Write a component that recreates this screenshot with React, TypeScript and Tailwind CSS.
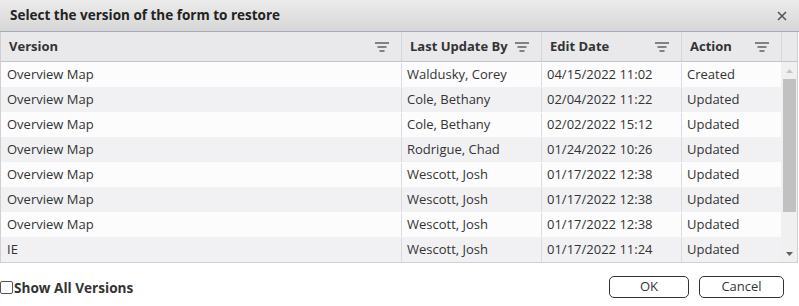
import { FC } from "react";

interface VersionRow {
  version: string;
  updatedBy: string;
  editDate: string;
  action: string;
}

const rows: VersionRow[] = [
  { version: "Overview Map", updatedBy: "Waldusky, Corey", editDate: "04/15/2022 11:02", action: "Created" },
  { version: "Overview Map", updatedBy: "Cole, Bethany", editDate: "02/04/2022 11:22", action: "Updated" },
  { version: "Overview Map", updatedBy: "Cole, Bethany", editDate: "02/02/2022 15:12", action: "Updated" },
  { version: "Overview Map", updatedBy: "Rodrigue, Chad", editDate: "01/24/2022 10:26", action: "Updated" },
  { version: "Overview Map", updatedBy: "Wescott, Josh", editDate: "01/17/2022 12:38", action: "Updated" },
  { version: "Overview Map", updatedBy: "Wescott, Josh", editDate: "01/17/2022 12:38", action: "Updated" },
  { version: "Overview Map", updatedBy: "Wescott, Josh", editDate: "01/17/2022 12:38", action: "Updated" },
  { version: "IE", updatedBy: "Wescott, Josh", editDate: "01/17/2022 11:24", action: "Updated" },
];

const columns = [
  { title: "Version", width: "w-[400px]" },
  { title: "Last Update By", width: "w-[140px]" },
  { title: "Edit Date", width: "w-[140px]" },
  { title: "Action", width: "w-[100px]" },
];

const FilterIcon: FC = () => (
  <svg width="14" height="10" viewBox="0 0 14 10" className="shrink-0">
    <g stroke="#555" strokeWidth="1.4">
      <line x1="0" y1="1" x2="14" y2="1" />
      <line x1="2.5" y1="5" x2="11.5" y2="5" />
      <line x1="4.5" y1="9" x2="9.5" y2="9" />
    </g>
  </svg>
);

export default function App() {
  return (
    <div className="w-[799px] h-[306px] bg-white text-[#333] font-['Open_Sans','Noto_Sans',sans-serif] text-[13px] overflow-hidden">
      {/* 标题栏 */}
      <div className="h-[32px] flex items-center justify-between pl-[10px] pr-[12px] bg-gradient-to-b from-[#ececec] to-[#d6d6d6] border-b border-[#a9a9bd]">
        <span className="font-bold text-[13.5px] text-[#222]">Select the version of the form to restore</span>
        <svg width="10" height="10" viewBox="0 0 10 10">
          <path d="M1 1L9 9M9 1L1 9" stroke="#555" strokeWidth="1.6" />
        </svg>
      </div>

      {/* 表格 */}
      <div className="w-[798px] border-l border-r border-b border-[#cfcfd4]">
        <div className="flex h-[30px] bg-[#e9e9ec] border-b border-[#c4c4ca]">
          {columns.map((col, i) => (
            <div
              key={col.title}
              className={`${col.width} flex items-center justify-between gap-1 pl-[8px] pr-[12px] font-bold text-[13px] ${i > 0 ? "border-l border-[#d6d6da]" : ""}`}
            >
              <span className="whitespace-nowrap">{col.title}</span>
              <FilterIcon />
            </div>
          ))}
          <div className="flex-1 border-l border-[#d6d6da]" />
        </div>

        <div className="flex">
          <div className="w-[780px]">
            {rows.map((row, i) => (
              <div key={i} className={`flex h-[25px] pt-[1px] ${i % 2 === 0 ? "bg-[#fcfcfc]" : "bg-[#f1f1f3]"}`}>
                <div className="w-[400px] flex items-center px-[6px]">{row.version}</div>
                <div className="w-[140px] flex items-center px-[5px] border-l border-[#dcdce0]">{row.updatedBy}</div>
                <div className="w-[140px] flex items-center px-[5px] border-l border-[#dcdce0]">{row.editDate}</div>
                <div className="w-[100px] flex items-center px-[5px] border-l border-[#dcdce0]">{row.action}</div>
              </div>
            ))}
          </div>

          {/* 滚动条 */}
          <div className="w-[17px] bg-[#f0f0f0] flex flex-col items-center">
            <div className="h-[17px] flex items-center justify-center">
              <svg width="7" height="4" viewBox="0 0 7 4">
                <path d="M3.5 0L7 4H0Z" fill="#c4c4c4" />
              </svg>
            </div>
            <div className="w-[13px] h-[133px] bg-[#c1c1c1]" />
            <div className="flex-1" />
            <div className="h-[17px] flex items-center justify-center">
              <svg width="7" height="4" viewBox="0 0 7 4">
                <path d="M0 0H7L3.5 4Z" fill="#606060" />
              </svg>
            </div>
          </div>
        </div>
      </div>

      {/* 底部 */}
      <div className="flex items-center justify-between h-[43px] pr-[15px]">
        <label className="flex items-center font-bold text-[13.6px] mt-[7px]">
          <span className="w-[13px] h-[13px] border border-[#555] rounded-[2px] bg-white mr-[1px]" />
          Show All Versions
        </label>
        <div className="flex gap-[10px] mt-[5px]">
          <button className="w-[80px] h-[22px] border border-[#333] rounded-[5px] bg-white text-[13px]">OK</button>
          <button className="w-[85px] h-[22px] border border-[#333] rounded-[5px] bg-white text-[13px]">Cancel</button>
        </div>
      </div>
    </div>
  );
}
